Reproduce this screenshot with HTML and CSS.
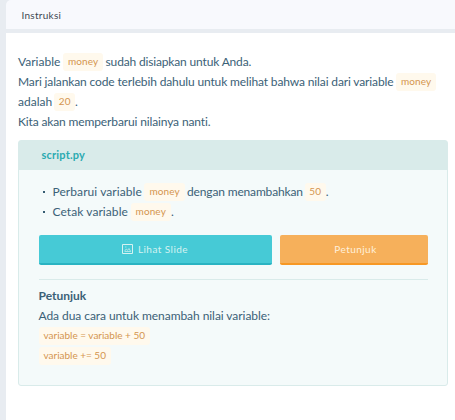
FILE: index.html
```html
<!DOCTYPE html>
<html lang="id">
<head>
<meta charset="utf-8">
<title>Instruksi</title>
<link rel="stylesheet" href="styles.css">
</head>
<body>
<main class="panel">
  <header class="panel-header"><span>Instruksi</span></header>
  <div class="content">
    <section class="intro">
      <p>Variable <code>money</code> <span class="tight after">sudah disiapkan untuk Anda.</span></p>
      <p><span class="snug">Mari jalankan code terlebih dahulu untuk melihat bahwa nilai dari variable</span> <code>money</code></p>
      <p>adalah <code class="number">20</code>.</p>
      <p><span class="snug">Kita akan memperbarui nilainya nanti.</span></p>
    </section>
    <section class="card">
      <h2 class="card-title">script.py</h2>
      <div class="card-body">
        <ul class="tasks">
          <li><span class="loose">Perbarui variable</span> <code>money</code> <span class="tight after">dengan menambahkan</span> <code class="number">50</code>.</li>
          <li><span class="loose">Cetak variable</span> <code>money</code>.</li>
        </ul>
        <div class="actions">
          <button class="button slide">
            <svg class="icon" viewBox="0 0 11 10" fill="none" stroke="currentColor"><path d="M.5.5h10v9H.5z"/><path d="M2.5 7.5h6.2L7 4.5 5.7 6.3 4.2 5 2.7 7M3.2 3h1.2" stroke-width=".7"/></svg>
            <span>Lihat Slide</span>
          </button>
          <button class="button hint"><span>Petunjuk</span></button>
        </div>
        <div class="hint-text">
          <h3>Petunjuk</h3>
          <p><span class="even">Ada dua cara untuk menambah nilai variable:</span></p>
          <p><code class="statement">variable = variable + 50</code></p>
          <p><code class="statement">variable += 50</code></p>
        </div>
      </div>
    </section>
  </div>
</main>
</body>
</html>
```
FILE: styles.css
```css
* { box-sizing: border-box; }
body {
  margin: 0;
  background: #e8ecf1;
  color: #3b6177;
  font: 12px/20px Lato, "Liberation Sans", sans-serif;
  font-variant-ligatures: none;
  overflow: hidden;
}
p, h2, h3, ul { margin: 0; padding: 0; }
.panel { margin-left: 6px; height: 420px; display: flex; flex-direction: column; }
.panel-header {
  height: 29px;
  padding: 5px 15.5px;
  background: #f8f9fd;
  color: #3d4852;
  border-top-left-radius: 5px;
  font-size: 10px;
  letter-spacing: .27px;
}
.content { flex: 1; margin-top: 4px; padding: 19px 7px 0 12px; background: #fff; }
.intro { white-space: nowrap; }
.intro p { height: 20px; }
.tight { letter-spacing: -.16px; }
.snug { letter-spacing: -.135px; }
.even { letter-spacing: -.06px; }
.loose { letter-spacing: .07px; }
.after { margin-left: -.8px; }
code {
  display: inline-block;
  height: 18px;
  padding: 0 5px;
  margin: 1px 0 0 -.5px;
  border-radius: 3px;
  background: #fff9ed;
  color: #d4954f;
  font: 10px/17px Lato, sans-serif;
  letter-spacing: .12px;
  vertical-align: top;
}
.number { margin-left: -1px; padding: 0 4.5px; }
.statement { margin-left: 0; letter-spacing: -.01px; }
.statement + .statement { letter-spacing: -.04px; }
.card {
  height: 246px;
  margin-top: 8px;
  border: 1px solid #d9ebea;
  border-radius: 3px;
  background: #f4fafa;
}
.card-title {
  height: 29px;
  padding: 4px 22.5px;
  background: #d9ebea;
  color: #2baab1;
  font-size: 11px;
  line-height: 20px;
  letter-spacing: .2px;
}
.card-body { padding: 12px 19px 0 20px; }
.tasks { list-style: none; white-space: nowrap; }
.tasks li { height: 20px; padding-left: 13.5px; position: relative; }
.tasks li::before {
  content: "";
  position: absolute;
  left: 4px;
  top: 9px;
  width: 2px;
  height: 2px;
  background: #355c72;
}
.actions { display: flex; gap: 8px; margin-top: 13px; }
.button {
  display: flex;
  align-items: center;
  justify-content: center;
  gap: 5px;
  height: 30px;
  padding: 0;
  border: 0;
  border-radius: 2px;
  color: #d5f2f1;
  font: 10px Lato, sans-serif;
  letter-spacing: .45px;
}
.slide { width: 233px; padding-right: 1px; background: #46cad6; border-bottom: 2px solid #2ab3c2; }
.hint { flex: 1; background: #f6b05b; border-bottom: 2px solid #f79824; color: #fff0dc; padding-left: 3px; }
.icon { width: 11px; height: 10px; }
.hint-text { margin-top: 14px; padding-top: 6px; border-top: 1px solid #d9ebea; }
h3 { font-size: 12px; line-height: 20px; }
.hint-text p { height: 20px; }
.hint-text p, h3 { margin-left: -.5px; }
```
